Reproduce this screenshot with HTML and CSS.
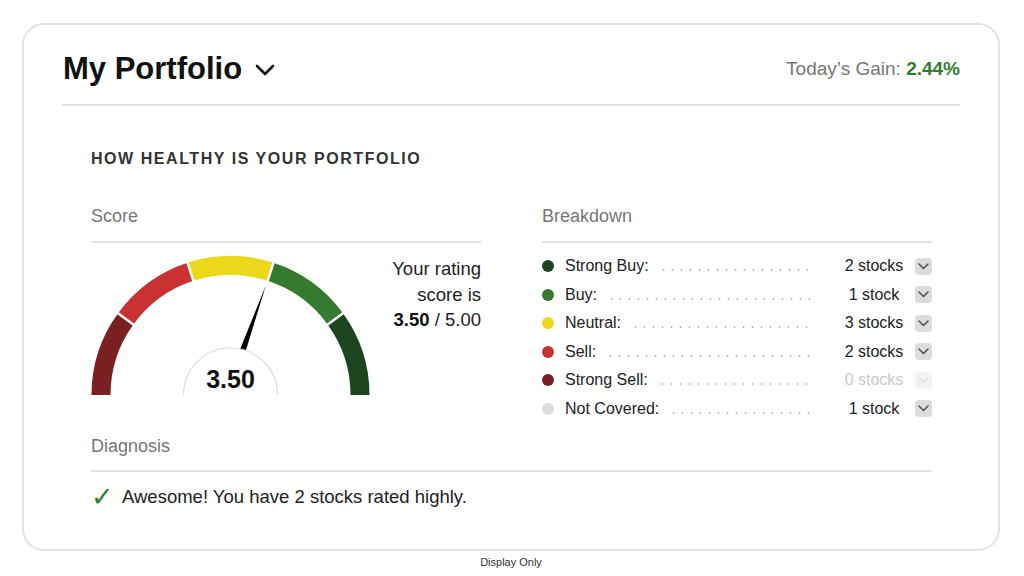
FILE: index.html
```html
<!DOCTYPE html>
<html lang="en">
<head>
<meta charset="utf-8">
<title>My Portfolio</title>
<link rel="stylesheet" href="styles.css">
</head>
<body>
<div class="card">
  <header class="header">
    <div class="title">
      <span>My Portfolio</span>
      <svg class="title-chev" width="20" height="12" viewBox="0 0 20 12"><path d="M2 2 L10 10 L18 2" fill="none" stroke="#111" stroke-width="2.6" stroke-linecap="round" stroke-linejoin="round"/></svg>
    </div>
    <div class="gain">Today’s Gain: <b>2.44%</b></div>
  </header>
  <section class="content">
    <h2 class="heading">HOW HEALTHY IS YOUR PORTFOLIO</h2>
    <div class="cols">
      <div class="col">
        <div class="col-label">Score</div>
        <div class="gauge-area">
          <svg class="gauge" width="279" height="152" viewBox="0 0 279 152">
            <g fill="none" stroke-width="19">
              <path d="M10 152 A129.5 129.5 0 0 1 34.73 75.88" stroke="#7b2020"/>
              <path d="M34.73 75.88 A129.5 129.5 0 0 1 99.48 28.83" stroke="#c83232"/>
              <path d="M99.48 28.83 A129.5 129.5 0 0 1 179.52 28.83" stroke="#ebd81a"/>
              <path d="M179.52 28.83 A129.5 129.5 0 0 1 244.27 75.88" stroke="#367a2f"/>
              <path d="M244.27 75.88 A129.5 129.5 0 0 1 269 152" stroke="#1d4620"/>
            </g>
            <g stroke="#fff" stroke-width="2.5">
              <line x1="43.6" y1="82.4" x2="24.6" y2="68.6"/>
              <line x1="103.0" y1="39.8" x2="95.8" y2="17.5"/>
              <line x1="176.0" y1="39.8" x2="183.2" y2="17.5"/>
              <line x1="235.4" y1="82.4" x2="254.4" y2="68.6"/>
            </g>
            <polygon points="175,42 152.4,115.6 146.2,113.4" fill="#000"/>
            <path d="M92.5 152 A47 47 0 0 1 186.5 152" fill="#fff" stroke="#dcdcdc" stroke-width="1.2"/>
            <text class="gauge-val" x="139.5" y="145" text-anchor="middle">3.50</text>
          </svg>
          <div class="rating">Your rating<br>score is<br><b>3.50</b> / 5.00</div>
        </div>
      </div>
      <div class="col">
        <div class="col-label">Breakdown</div>
        <ul class="rows">
          <li class="row"><span class="dot" style="background:#1d4620"></span><span class="lbl">Strong Buy:</span><span class="lead"></span><span class="cnt">2 stocks</span><span class="btn"><svg width="11" height="7" viewBox="0 0 11 7"><path d="M1 1 L5.5 5.5 L10 1" fill="none" stroke="#555" stroke-width="1.6" stroke-linecap="round" stroke-linejoin="round"/></svg></span></li>
          <li class="row"><span class="dot" style="background:#367a2f"></span><span class="lbl">Buy:</span><span class="lead"></span><span class="cnt">1 stock</span><span class="btn"><svg width="11" height="7" viewBox="0 0 11 7"><path d="M1 1 L5.5 5.5 L10 1" fill="none" stroke="#555" stroke-width="1.6" stroke-linecap="round" stroke-linejoin="round"/></svg></span></li>
          <li class="row"><span class="dot" style="background:#ebd81a"></span><span class="lbl">Neutral:</span><span class="lead"></span><span class="cnt">3 stocks</span><span class="btn"><svg width="11" height="7" viewBox="0 0 11 7"><path d="M1 1 L5.5 5.5 L10 1" fill="none" stroke="#555" stroke-width="1.6" stroke-linecap="round" stroke-linejoin="round"/></svg></span></li>
          <li class="row"><span class="dot" style="background:#c83232"></span><span class="lbl">Sell:</span><span class="lead"></span><span class="cnt">2 stocks</span><span class="btn"><svg width="11" height="7" viewBox="0 0 11 7"><path d="M1 1 L5.5 5.5 L10 1" fill="none" stroke="#555" stroke-width="1.6" stroke-linecap="round" stroke-linejoin="round"/></svg></span></li>
          <li class="row"><span class="dot" style="background:#7b2020"></span><span class="lbl">Strong Sell:</span><span class="lead"></span><span class="cnt muted">0 stocks</span><span class="btn disabled"><svg width="11" height="7" viewBox="0 0 11 7"><path d="M1 1 L5.5 5.5 L10 1" fill="none" stroke="#dedee2" stroke-width="1.6" stroke-linecap="round" stroke-linejoin="round"/></svg></span></li>
          <li class="row"><span class="dot" style="background:#dcdcdc"></span><span class="lbl">Not Covered:</span><span class="lead"></span><span class="cnt">1 stock</span><span class="btn"><svg width="11" height="7" viewBox="0 0 11 7"><path d="M1 1 L5.5 5.5 L10 1" fill="none" stroke="#555" stroke-width="1.6" stroke-linecap="round" stroke-linejoin="round"/></svg></span></li>
        </ul>
      </div>
    </div>
    <div class="diag-label">Diagnosis</div>
    <div class="diag"><span class="check">✓</span><span>Awesome! You have 2 stocks rated highly.</span></div>
  </section>
</div>
<div class="footnote">Display Only</div>
</body>
</html>
```
FILE: styles.css
```css
* { box-sizing: border-box; }
html, body { margin: 0; padding: 0; background: #fff; }
body {
  font-family: "Liberation Sans", Arial, sans-serif;
  color: #222;
  padding: 23px 0 0 22px;
}
.card {
  width: 978px;
  height: 528px;
  border: 2px solid #e2e2e2;
  border-radius: 22px;
  padding: 0 38px;
}
.header {
  height: 81px;
  padding-top: 8px;
  padding-left: 1px;
  display: flex;
  align-items: center;
  justify-content: space-between;
  border-bottom: 2px solid #e3e3e3;
}
.title {
  display: flex;
  align-items: center;
  font-size: 31px;
  font-weight: 700;
  color: #111;
  line-height: 36px;
}
.title-chev { margin-left: 13px; margin-top: 2px; }
.gain {
  font-size: 19px;
  color: #777;
  line-height: 24px;
}
.gain b { color: #2f7d32; font-weight: 700; }
.content { padding: 0 28px 0 29px; }
.heading {
  margin: 43px 0 0;
  font-size: 16px;
  line-height: 20px;
  font-weight: 700;
  letter-spacing: 1.55px;
  color: #333;
}
.cols {
  display: grid;
  grid-template-columns: 390px 390px;
  column-gap: 61px;
  align-items: start;
  margin-top: 37px;
}
.col-label {
  font-size: 18px;
  line-height: 20px;
  color: #777;
  padding-bottom: 15px;
  border-bottom: 2px solid #e3e3e3;
}
.gauge-area {
  display: flex;
  height: 152px;
}
.gauge { display: block; flex: none; }
.gauge-val {
  font-family: "Liberation Sans", Arial, sans-serif;
  font-size: 25px;
  font-weight: 700;
  fill: #111;
}
.rating {
  flex: 1;
  text-align: right;
  padding-top: 13px;
  font-size: 18.5px;
  line-height: 25.5px;
  color: #222;
}
.rating b { font-weight: 700; color: #111; }
.rows {
  list-style: none;
  margin: 0;
  padding: 9px 0 0;
}
.row {
  display: flex;
  align-items: center;
  height: 28.5px;
  font-size: 16px;
  color: #222;
}
.dot {
  width: 12px;
  height: 12px;
  border-radius: 50%;
  flex: none;
  margin-right: 11px;
}
.lbl { flex: none; }
.lead {
  flex: 1;
  height: 4px;
  margin: 8px 26px 0 10px;
  background-image: radial-gradient(circle, #b5b5b5 0.8px, transparent 1.2px);
  background-size: 9px 4px;
  background-repeat: repeat-x;
  background-position: left center;
}
.cnt {
  width: 72px;
  text-align: center;
  flex: none;
}
.cnt.muted { color: #c9c9c9; }
.btn {
  width: 17px;
  height: 17px;
  margin-left: 5px;
  border-radius: 4px;
  background: #dcdcdc;
  display: flex;
  align-items: center;
  justify-content: center;
  flex: none;
}
.btn.disabled { background: #f3f3f6; }
.diag-label {
  margin-top: 13px;
  font-size: 18px;
  line-height: 20px;
  color: #777;
  padding-bottom: 14px;
  border-bottom: 2px solid #e3e3e3;
}
.diag {
  margin-top: 14px;
  display: flex;
  align-items: center;
  font-size: 18.5px;
  line-height: 22px;
  color: #222;
}
.check {
  font-family: "DejaVu Sans", sans-serif;
  font-size: 27px;
  font-weight: 700;
  color: #2f7d32;
  width: 31px;
  flex: none;
}
.footnote {
  width: 978px;
  text-align: center;
  font-size: 11px;
  line-height: 14px;
  color: #333;
  margin-top: 4px;
}
```
